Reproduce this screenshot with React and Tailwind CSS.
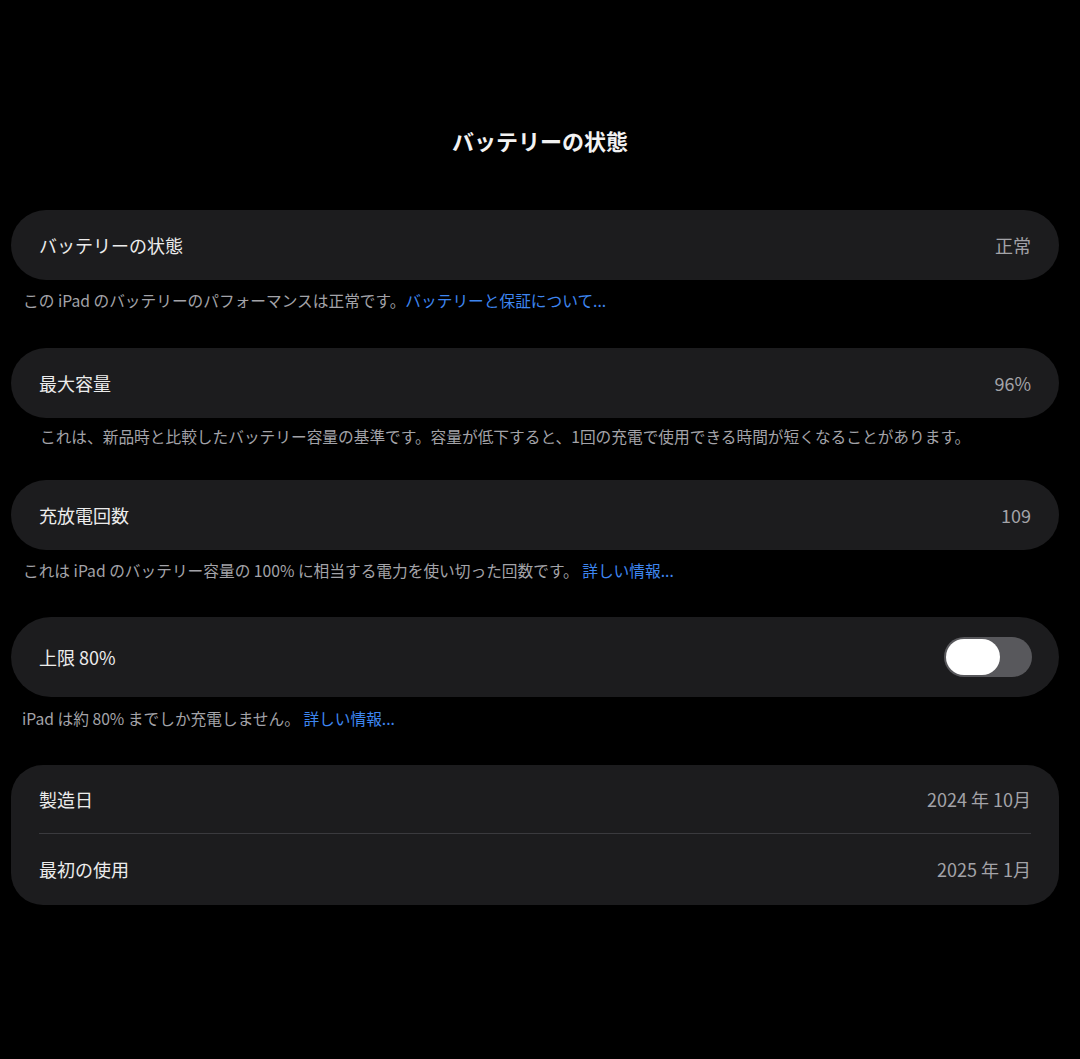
export default function App() {
  const font = { fontFamily: '"Noto Sans CJK JP", Inter, sans-serif' }
  return (
    <div className="min-h-[1059px] w-[1080px] bg-black text-white" style={font}>
      <div className="pt-[125px] pb-[55px] text-center text-[22px] font-bold leading-[30px] text-[#f2f2f2]">
        バッテリーの状態
      </div>

      <div className="pl-[11px] pr-[21px]">
        {/* 状態 */}
        <div className="flex h-[70px] items-center justify-between rounded-[35px] bg-[#1c1c1e] pl-[28px] pr-[28px]">
          <span className="text-[18px] text-[#ececec]">バッテリーの状態</span>
          <span className="text-[18px] text-[#a3a3a8]">正常</span>
        </div>
        <p className="mt-[10px] pl-[12px] text-[15.7px] leading-[22px] text-[#a3a3a8]">
          この iPad のバッテリーのパフォーマンスは正常です。<span className="text-[#3e86f0]">バッテリーと保証について...</span>
        </p>

        {/* 最大容量 */}
        <div className="mt-[36px] flex h-[70px] items-center justify-between rounded-[35px] bg-[#1c1c1e] pl-[28px] pr-[28px]">
          <span className="text-[18px] text-[#ececec]">最大容量</span>
          <span className="text-[18px] text-[#a3a3a8]">96%</span>
        </div>
        <p className="mt-[8px] pl-[29px] text-[15.7px] leading-[22px] text-[#a3a3a8]">
          これは、新品時と比較したバッテリー容量の基準です。容量が低下すると、1回の充電で使用できる時間が短くなることがあります。
        </p>

        {/* 充放電回数 */}
        <div className="mt-[32px] flex h-[70px] items-center justify-between rounded-[35px] bg-[#1c1c1e] pl-[28px] pr-[28px]">
          <span className="text-[18px] text-[#ececec]">充放電回数</span>
          <span className="text-[18px] text-[#a3a3a8]">109</span>
        </div>
        <p className="mt-[10px] pl-[12px] text-[15.7px] leading-[22px] text-[#a3a3a8]">
          これは iPad のバッテリー容量の 100% に相当する電力を使い切った回数です。 <span className="text-[#3e86f0]">詳しい情報...</span>
        </p>

        {/* 上限80% */}
        <div className="mt-[35px] flex h-[80px] items-center justify-between rounded-[40px] bg-[#1c1c1e] pl-[28px] pr-[27px]">
          <span className="text-[18px] text-[#ececec]">上限 80%</span>
          <div className="flex h-[40px] w-[88px] items-center rounded-full bg-[#58585c] p-[2px]">
            <div className="h-[36px] w-[54px] rounded-full bg-white" />
          </div>
        </div>
        <p className="mt-[11px] pl-[11px] text-[15.7px] leading-[22px] text-[#a3a3a8]">
          iPad は約 80% までしか充電しません。 <span className="text-[#3e86f0]">詳しい情報...</span>
        </p>

        {/* 日付 */}
        <div className="mt-[35px] rounded-[32px] bg-[#1c1c1e] pl-[28px] pr-[28px]">
          <div className="flex h-[69px] items-center justify-between border-b border-[#3a3a3e]">
            <span className="text-[18px] text-[#ececec]">製造日</span>
            <span className="text-[18px] text-[#a3a3a8]">2024 年 10月</span>
          </div>
          <div className="flex h-[71px] items-center justify-between">
            <span className="text-[18px] text-[#ececec]">最初の使用</span>
            <span className="text-[18px] text-[#a3a3a8]">2025 年 1月</span>
          </div>
        </div>
      </div>
    </div>
  )
}
